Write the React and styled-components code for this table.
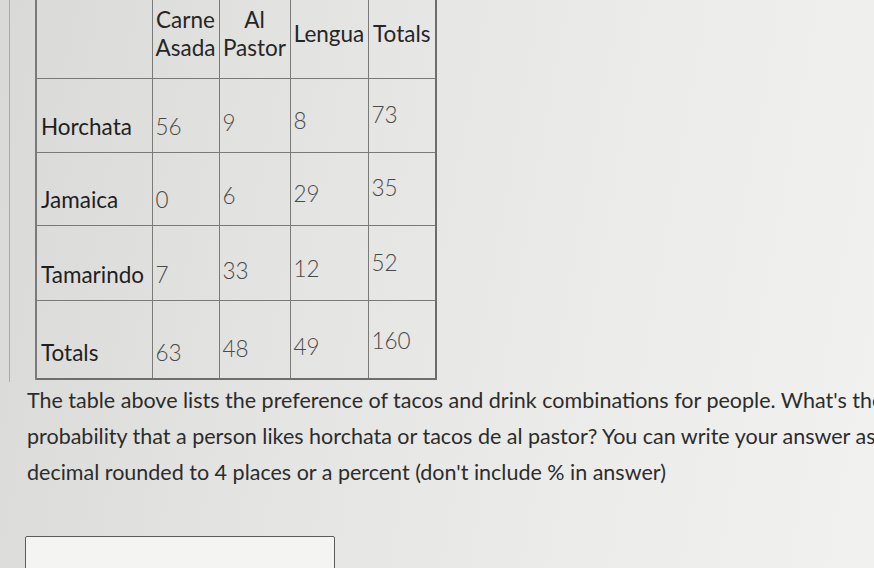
import React from 'react';
import styled, { createGlobalStyle } from 'styled-components';

const GlobalStyle = createGlobalStyle`
  html, body {
    margin: 0;
    padding: 0;
  }
  body {
    width: 874px;
    height: 568px;
    overflow: hidden;
    font-family: Lato, "Open Sans", sans-serif;
  }
`;

const Page = styled.div`
  width: 874px;
  height: 568px;
  overflow: hidden;
  background: linear-gradient(100deg, #d9d9d7 0%, #e4e4e2 35%, #ececea 70%, #f1f1ef 100%);
`;

const Frame = styled.div`
  margin-left: 9px;
  padding-left: 25px;
  height: 382px;
  border-left: 1px solid #a9a9a7;
  overflow: hidden;
`;

const Table = styled.table`
  border-collapse: collapse;
  table-layout: fixed;
  margin-top: -12px;
  font-size: 22.5px;
  border-right: 2px solid #6e6e6c;
  border-bottom: 2px solid #6e6e6c;
`;

const Row = styled.tr`
  height: ${p => p.$h}px;
`;

const HeadCell = styled.th`
  padding: 0;
  font-weight: 400;
  line-height: 28px;
  color: #262626;
  text-align: center;
  vertical-align: middle;
  white-space: nowrap;
  border: 1.5px solid #7a7a78;
  border-left-width: ${p => (p.$first ? '2px' : '1.5px')};
`;

const Label = styled.td`
  padding: 0 0 12px 4px;
  color: #1f1f1f;
  font-weight: 400;
  vertical-align: bottom;
  white-space: nowrap;
  border: 1.5px solid #7a7a78;
  border-left-width: 2px;
`;

const Num = styled.td`
  padding: 0 0 ${p => p.$lift}px 3px;
  color: #4a4a4a;
  font-weight: 300;
  vertical-align: bottom;
  border: 1.5px solid #7a7a78;
`;

const Question = styled.p`
  margin: 0;
  padding-left: 27px;
  font-size: 21.5px;
  line-height: 36px;
  color: #2c2c2c;
  white-space: nowrap;
`;

const AnswerBox = styled.div`
  margin: 46px 0 0 25px;
  width: 308px;
  height: 40px;
  background: #f4f4f2;
  border: 1.5px solid #5c5c5a;
  border-radius: 2px;
`;

const columns = [
  { w: 116, label: '' },
  { w: 67, label: ['Carne', 'Asada'] },
  { w: 71, label: ['Al', 'Pastor'] },
  { w: 78, label: ['Lengua'] },
  { w: 68, label: ['Totals'] },
];

const rows = [
  { name: 'Horchata', h: 74, values: ['56', '9', '8', '73'] },
  { name: 'Jamaica', h: 73, values: ['0', '6', '29', '35'] },
  { name: 'Tamarindo', h: 75, values: ['7', '33', '12', '52'] },
  { name: 'Totals', h: 78, values: ['63', '48', '49', '160'] },
];

const lifts = [12, 16, 18, 24];

export default function App() {
  return (
    <Page>
      <GlobalStyle />
      <Frame>
        <Table>
          <colgroup>
            {columns.map((c, i) => <col key={i} style={{ width: c.w }} />)}
          </colgroup>
          <thead>
            <Row $h={90}>
              {columns.map((c, i) => (
                <HeadCell key={i} $first={i === 0}>
                  {c.label && c.label.map((line, j) => <div key={j}>{line}</div>)}
                </HeadCell>
              ))}
            </Row>
          </thead>
          <tbody>
            {rows.map(r => (
              <Row key={r.name} $h={r.h}>
                <Label>{r.name}</Label>
                {r.values.map((v, i) => <Num key={i} $lift={lifts[i]}>{v}</Num>)}
              </Row>
            ))}
          </tbody>
        </Table>
      </Frame>
      <Question>
        The table above lists the preference of tacos and drink combinations for people. What's the
        <br />
        probability that a person likes horchata or tacos de al pastor? You can write your answer as a
        <br />
        decimal rounded to 4 places or a percent (don't include % in answer)
      </Question>
      <AnswerBox />
    </Page>
  );
}
